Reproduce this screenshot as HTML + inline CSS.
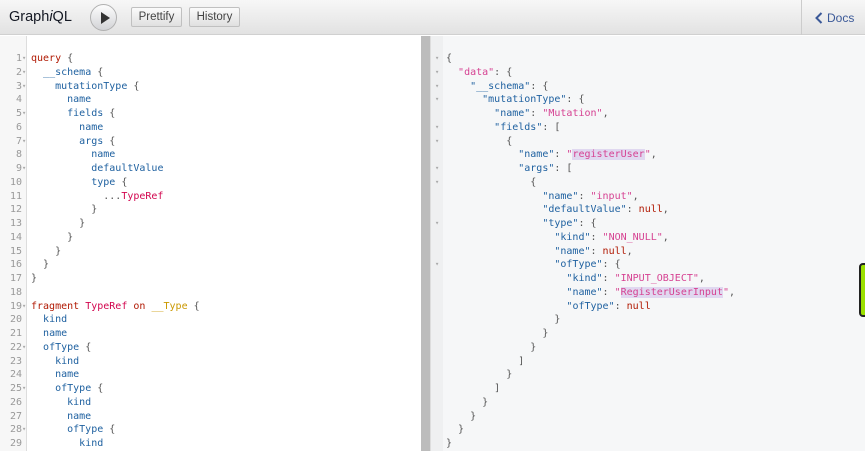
<!DOCTYPE html>
<html><head><meta charset="utf-8"><style>
*{margin:0;padding:0;box-sizing:border-box}
body{width:865px;height:451px;overflow:hidden;background:#fff;font-family:"Liberation Sans",sans-serif;position:relative}
.top{position:absolute;left:0;top:0;width:865px;height:35px;background:linear-gradient(#f7f7f7,#e2e2e2);border-bottom:1px solid #d0d0d0}
.title{position:absolute;left:9px;top:9px;font-size:14.5px;color:#141823}
.play{position:absolute;left:90px;top:4px;width:27px;height:27px;border-radius:50%;background:linear-gradient(#fdfdfd,#d2d3d6);border:1px solid #b0b0b0}
.play:after{content:"";position:absolute;left:10px;top:7px;border-left:9px solid #333;border-top:6px solid transparent;border-bottom:6px solid transparent}
.btn{position:absolute;top:7px;height:20px;line-height:18px;border:1px solid #c0c0c0;background:linear-gradient(#fbfbfb,#e0e0e0);font-size:11.5px;color:#444;text-align:center;border-radius:2px}
.docs{position:absolute;left:801px;top:0;width:64px;height:35px;border-left:1px solid #ccc;font-size:12px;color:#3b5998;padding:11px 0 0 25px}
.docs svg{position:absolute;left:13px;top:12px}
.code{position:absolute;top:52px;font-family:"DejaVu Sans Mono",monospace;font-size:10px;line-height:13.75px;white-space:pre}
.ln{left:0;width:22px;text-align:right;color:#999}
.fm{color:#aaa;font-size:7px}
.k{color:#b11a04}.d{color:#d2054e}.p{color:#1f61a0}.a{color:#ca9800}.u{color:#555}.s{color:#d64292}.n{color:#b11a04}
.hl{background:#e0d8f0}
</style></head><body>
<div class="top">
<div class="title">Graph<i>i</i>QL</div>
<div class="play"></div>
<div class="btn" style="left:131px;width:51px">Prettify</div>
<div class="btn" style="left:189px;width:51px">History</div>
<div class="docs"><svg width="8" height="12" viewBox="0 0 8 12"><path d="M6.5 1 L1.5 6 L6.5 11" stroke="#3b5998" stroke-width="2" fill="none"/></svg>Docs</div>
</div>
<div style="position:absolute;left:0;top:36px;width:27px;height:415px;background:#f7f7f7;border-right:1px solid #ddd"></div>
<div class="code ln">1
2
3
4
5
6
7
8
9
10
11
12
13
14
15
16
17
18
19
20
21
22
23
24
25
26
27
28
29</div>
<div class="code fm" style="left:22px;font-size:7px;line-height:13.75px">▾
▾
▾

▾

▾

▾









▾


▾


▾


▾</div>
<div class="code u" style="left:31px"><span class="k">query</span> {
  <span class="p">__schema</span> {
    <span class="p">mutationType</span> {
      <span class="p">name</span>
      <span class="p">fields</span> {
        <span class="p">name</span>
        <span class="p">args</span> {
          <span class="p">name</span>
          <span class="p">defaultValue</span>
          <span class="p">type</span> {
            ...<span class="d">TypeRef</span>
          }
        }
      }
    }
  }
}

<span class="k">fragment</span> <span class="d">TypeRef</span> <span class="k">on</span> <span class="a">__Type</span> {
  <span class="p">kind</span>
  <span class="p">name</span>
  <span class="p">ofType</span> {
    <span class="p">kind</span>
    <span class="p">name</span>
    <span class="p">ofType</span> {
      <span class="p">kind</span>
      <span class="p">name</span>
      <span class="p">ofType</span> {
        <span class="p">kind</span></div>
<div style="position:absolute;left:421px;top:36px;width:9px;height:415px;background:#bcbcbc"></div>
<div style="position:absolute;left:430px;top:36px;width:435px;height:415px;background:#f6f7f8;border-left:1px solid #ddd"></div>
<div style="position:absolute;left:431px;top:36px;width:12px;height:415px;background:#eff0f1"></div>
<div class="code fm" style="left:435px">▾
▾
▾
▾

▾
▾

▾
▾


▾


▾</div>
<div class="code u" style="left:446px">{
  <span class="s">"data"</span>: {
    <span class="p">"__schema"</span>: {
      <span class="p">"mutationType"</span>: {
        <span class="p">"name"</span>: <span class="s">"Mutation"</span>,
        <span class="p">"fields"</span>: [
          {
            <span class="p">"name"</span>: <span class="s">"<span class="hl">registerUser</span>"</span>,
            <span class="p">"args"</span>: [
              {
                <span class="p">"name"</span>: <span class="s">"input"</span>,
                <span class="p">"defaultValue"</span>: <span class="n">null</span>,
                <span class="p">"type"</span>: {
                  <span class="p">"kind"</span>: <span class="s">"NON_NULL"</span>,
                  <span class="p">"name"</span>: <span class="n">null</span>,
                  <span class="p">"ofType"</span>: {
                    <span class="p">"kind"</span>: <span class="s">"INPUT_OBJECT"</span>,
                    <span class="p">"name"</span>: <span class="s">"<span class="hl">RegisterUserInput</span>"</span>,
                    <span class="p">"ofType"</span>: <span class="n">null</span>
                  }
                }
              }
            ]
          }
        ]
      }
    }
  }
}</div>
<div style="position:absolute;left:859px;top:263px;width:10px;height:54px;background:#9be000;border:2px solid #222;border-radius:4px"></div>
</body></html>
